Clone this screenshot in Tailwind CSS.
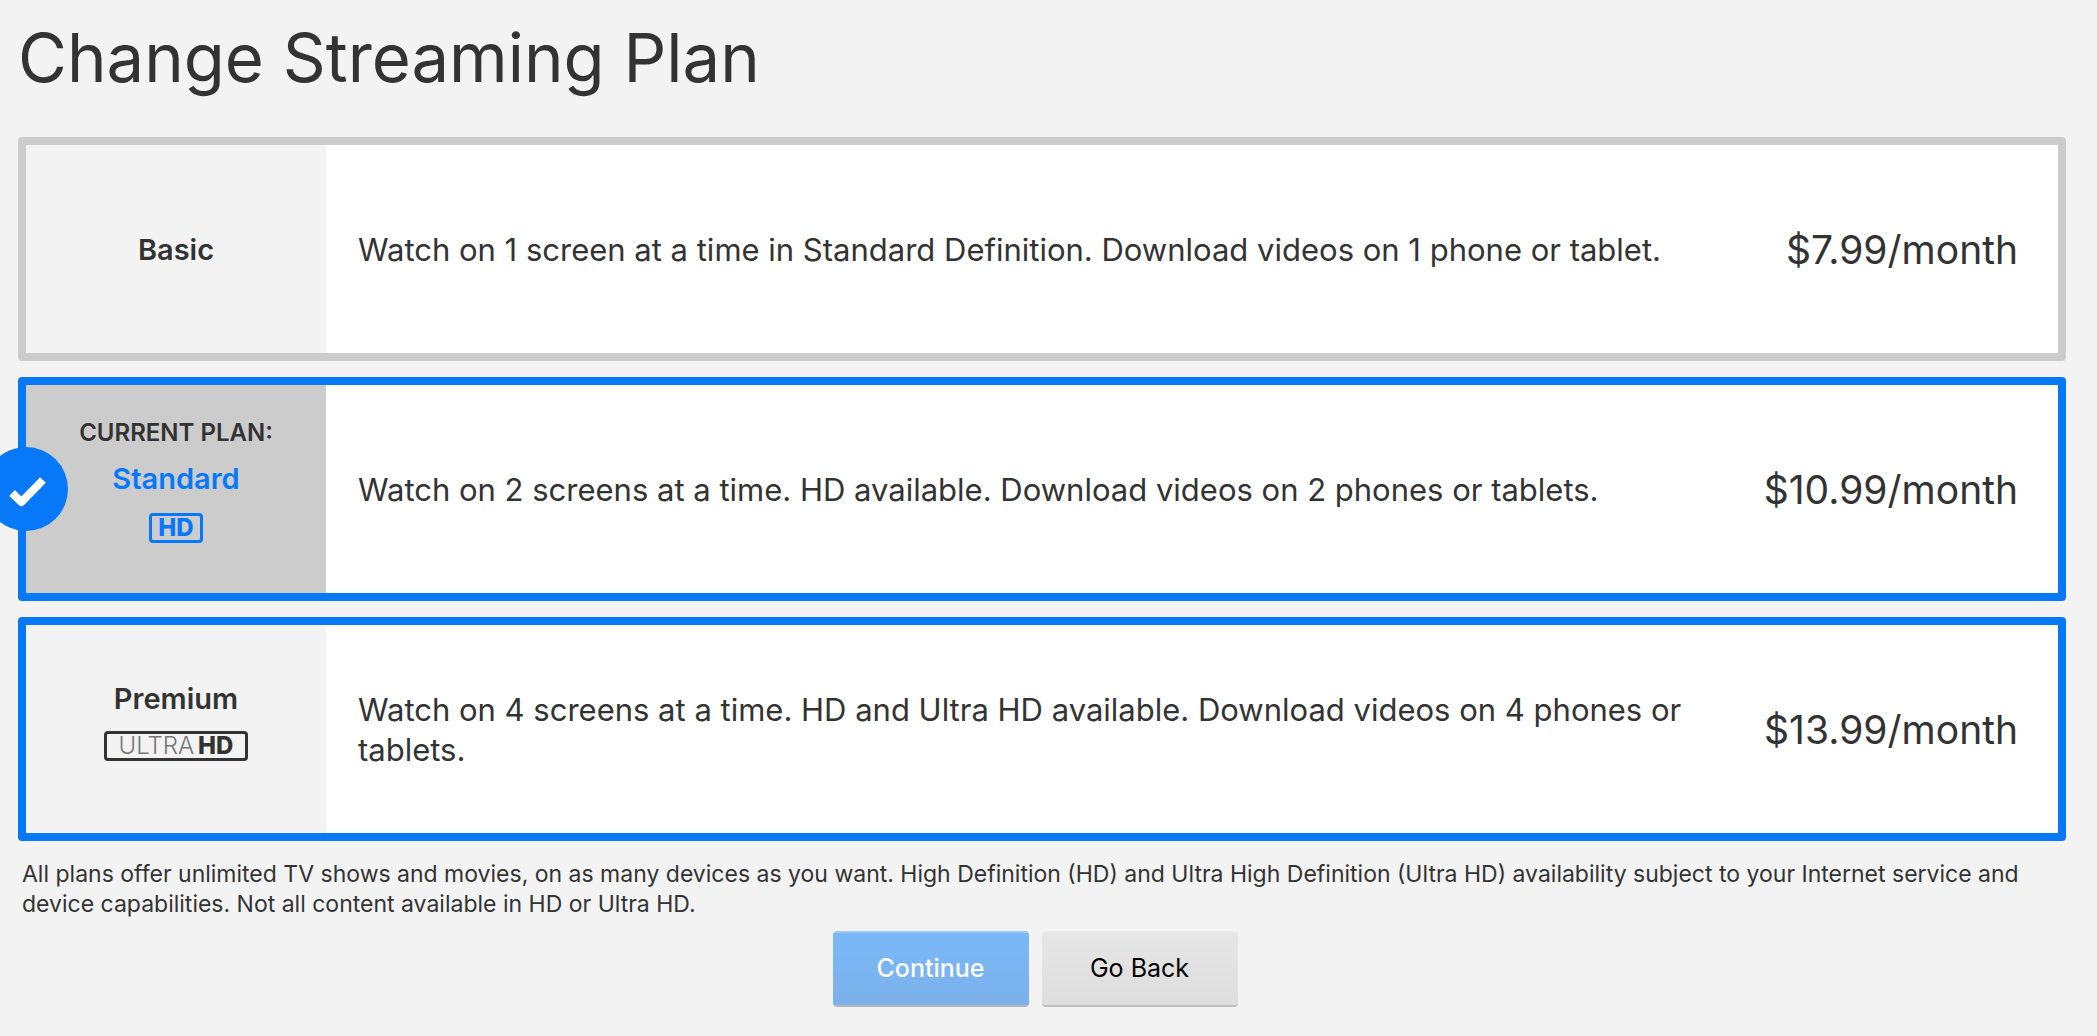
<!DOCTYPE html>
<html lang="en">

<head>
	<meta charset="UTF-8">
	<meta name="viewport" content="width=device-width, initial-scale=1.0">
	<title>Change Streaming Plan</title>
	<script src="https://cdn.jsdelivr.net/npm/@tailwindcss/browser@4"></script>
</head>

<body class="min-h-screen overflow-x-hidden bg-[#f3f3f3] font-['Inter',sans-serif] text-[#333]">

	<main class="pl-[18px] pr-[31px] pt-5">
		<h1 class="text-[67px] leading-[76px]">Change Streaming Plan</h1>

		<form id="planForm">
			<div class="mt-[41px] flex flex-col gap-4">

				<!-- Basic -->
				<label class="flex min-h-56 cursor-pointer rounded border-8 border-[#ccc] bg-white">
					<input type="radio" name="plan" value="basic" class="sr-only">
					<span class="flex w-[300px] shrink-0 flex-col items-center justify-center bg-[#f3f3f3] pt-0.5 text-[29px] leading-10 font-semibold">Basic</span>
					<span class="flex flex-1 items-center pt-0.5 pl-8 text-[31px] leading-10">Watch on 1 screen at a time in Standard Definition. Download videos on 1 phone or tablet.</span>
					<span class="flex w-[360px] shrink-0 items-center justify-end pt-0.5 pr-10 text-[39px] leading-10">$7.99/month</span>
				</label>

				<!-- Standard (current) -->
				<label class="relative flex min-h-56 cursor-pointer rounded border-8 border-[#0779f8] bg-white">
					<input type="radio" name="plan" value="standard" class="sr-only" checked>
					<span class="flex w-[300px] shrink-0 flex-col items-center justify-center bg-[#ccc] pb-[22px]">
						<span class="text-[24px] leading-10 font-semibold">CURRENT PLAN:</span>
						<span class="mt-1.5 text-[29px] leading-10 font-semibold text-[#0779f8]">Standard</span>
						<span class="mt-3.5 flex h-[30px] w-[54px] items-center justify-center rounded border-3 border-[#0779f8] text-[24px] leading-6 font-extrabold text-[#0779f8]">HD</span>
					</span>
					<span class="flex flex-1 items-center pt-0.5 pl-8 text-[31px] leading-10">Watch on 2 screens at a time. HD available. Download videos on 2 phones or tablets.</span>
					<span class="flex w-[360px] shrink-0 items-center justify-end pt-0.5 pr-10 text-[39px] leading-10">$10.99/month</span>
					<svg class="absolute top-1/2 -left-[42px] size-[84px] -translate-y-1/2" viewBox="0 0 84 84" aria-hidden="true">
						<circle cx="42" cy="42" r="42" fill="#0779f8" />
						<path d="M28 46l9.500 9 21.500-22" fill="none" stroke="#fff" stroke-width="8" stroke-linejoin="round" />
					</svg>
				</label>

				<!-- Premium -->
				<label class="flex min-h-56 cursor-pointer rounded border-8 border-[#0779f8] bg-white">
					<input type="radio" name="plan" value="premium" class="sr-only">
					<span class="flex w-[300px] shrink-0 flex-col items-center justify-center bg-[#f3f3f3] pb-[18px]">
						<span class="text-[29px] leading-10 font-semibold">Premium</span>
						<span class="mt-3 flex h-[30px] w-[144px] items-center justify-center gap-1 rounded border-3 border-[#333] text-[24px] leading-6 font-extrabold"><span class="font-light text-[#777]">ULTRA</span>HD</span>
					</span>
					<span class="flex flex-1 items-center pt-0.5 pl-8 text-[31px] leading-10">Watch on 4 screens at a time. HD and Ultra HD available. Download videos on 4 phones or tablets.</span>
					<span class="flex w-[360px] shrink-0 items-center justify-end pt-0.5 pr-10 text-[39px] leading-10">$13.99/month</span>
				</label>
			</div>

			<p class="mt-[18px] pr-10 pl-1 text-[23px] leading-[30px]">All plans offer unlimited TV shows and movies, on as many devices as you want. High Definition (HD) and Ultra High Definition (Ultra HD) availability subject to your Internet service and device capabilities. Not all content available in HD or Ultra HD.</p>

			<div class="mt-3 mr-3.5 flex justify-center gap-[13px]">
				<button type="submit" disabled
					class="h-[76px] w-[196px] rounded border-t-2 border-b-2 border-t-[#9ccbfa] border-b-[#b4bac1] bg-linear-to-b from-[#7ab8f9] to-[#7bb1ea] text-[25px] font-medium text-white">Continue</button>
				<button type="button" id="btnBack"
					class="h-[76px] w-[196px] rounded border-t-2 border-b-2 border-t-[#e9e9e9] border-b-[#bfbfbf] bg-linear-to-b from-[#e6e6e6] to-[#dddddd] text-[25px] text-black">Go Back</button>
			</div>
		</form>
	</main>

	<script>
		document.getElementById("btnBack").addEventListener("click", () => {
			history.back();
		});
	</script>

</body>

</html>
